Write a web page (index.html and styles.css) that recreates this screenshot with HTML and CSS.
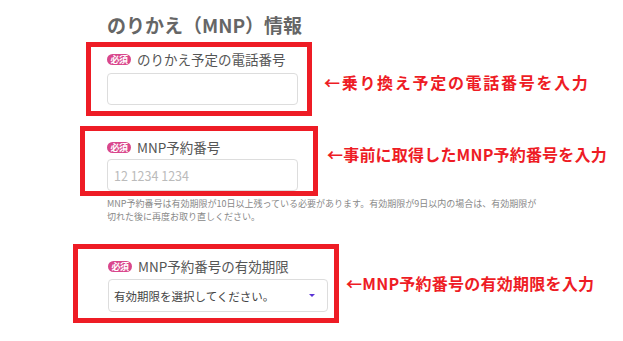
FILE: index.html
```html
<!DOCTYPE html>
<html lang="ja">
<head>
  <meta charset="UTF-8" />
  <meta name="viewport" content="width=device-width, initial-scale=1.0"/>
  <title>のりかえ（MNP）情報</title>
  <link rel="stylesheet" href="styles.css">
</head>
<body>
  <main class="form">
    <h2 class="form-title">のりかえ（MNP）情報</h2>

    <!-- 電話番号 -->
    <div class="row">
      <div class="mark mark-phone">
        <label class="field-label"><span class="badge">必須</span>のりかえ予定の電話番号</label>
        <input class="field-input" type="text">
      </div>
      <p class="callout callout-phone">←乗り換え予定の電話番号を入力</p>
    </div>

    <!-- 予約番号 -->
    <div class="row row-number">
      <div class="mark mark-number">
        <label class="field-label"><span class="badge">必須</span>MNP予約番号</label>
        <input class="field-input" type="text" placeholder="12 1234 1234">
      </div>
      <p class="callout callout-number">←事前に取得したMNP予約番号を入力</p>
    </div>
    <p class="help">MNP予約番号は有効期限が10日以上残っている必要があります。有効期限が9日以内の場合は、有効期限が<br>切れた後に再度お取り直しください。</p>

    <!-- 有効期限 -->
    <div class="row row-limit">
      <div class="mark mark-limit">
        <label class="field-label"><span class="badge">必須</span>MNP予約番号の有効期限</label>
        <div class="field-select">
          <span>有効期限を選択してください。</span>
          <span class="caret"></span>
        </div>
      </div>
      <p class="callout callout-limit">←MNP予約番号の有効期限を入力</p>
    </div>
  </main>
</body>
</html>
```

FILE: styles.css
```css
body {
  margin: 0;
  background: #fff;
  font-family: "Noto Sans CJK JP", "Noto Sans", sans-serif;
  color: #555;
}
.form {
  padding-top: 13px;
}
.form-title {
  margin: 0 0 5px 107px;
  font-size: 19px;
  line-height: 24px;
  font-weight: bold;
  color: #666;
}
.row {
  display: flex;
  align-items: flex-start;
}
.row-number {
  margin-top: 10px;
}
.row-limit {
  margin-top: 21px;
}
.mark {
  box-sizing: border-box;
  display: flex;
  flex-direction: column;
  align-items: flex-start;
  border: 5px solid #ee1c25;
}
.mark-phone {
  margin-left: 86px;
  width: 226px;
  height: 74px;
  padding: 2px 0 0 16px;
  gap: 4px;
}
.mark-number {
  margin-left: 80px;
  width: 238px;
  height: 70px;
  padding: 6px 0 0 22px;
  gap: 2px;
}
.mark-limit {
  margin-left: 73px;
  width: 266px;
  height: 79px;
  padding: 7px 0 0 30px;
  gap: 3px;
}
.field-label {
  display: flex;
  align-items: center;
  gap: 6px;
  font-size: 13.5px;
  line-height: 20px;
  color: #555;
}
.badge {
  display: inline-block;
  width: 24px;
  height: 11px;
  border-radius: 6px;
  background: #d9478c;
  color: #fff;
  font-size: 9px;
  line-height: 11px;
  font-weight: bold;
  text-align: center;
  letter-spacing: -0.5px;
}
.field-input {
  box-sizing: border-box;
  width: 191px;
  height: 32px;
  margin: 0;
  padding: 0 6px;
  border: 1px solid #ddd;
  border-radius: 4px;
  background: #fff;
  font-family: inherit;
  font-size: 12.5px;
  color: #444;
}
.field-input::placeholder {
  color: #bbb;
}
.field-select {
  box-sizing: border-box;
  display: flex;
  align-items: center;
  justify-content: space-between;
  width: 220px;
  height: 33px;
  padding: 0 12px 0 5px;
  border: 1px solid #ddd;
  border-radius: 4px;
  font-size: 11.5px;
  color: #444;
}
.caret {
  width: 0;
  height: 0;
  border-left: 3px solid transparent;
  border-right: 3px solid transparent;
  border-top: 3px solid #5a32d6;
}
.callout {
  margin: 0;
  font-size: 16px;
  line-height: 20px;
  font-weight: bold;
  color: #ee1c25;
  white-space: nowrap;
}
.callout-phone {
  margin: 30px 0 0 12px;
  letter-spacing: 1.7px;
}
.callout-number {
  margin: 18px 0 0 9px;
  letter-spacing: 0.2px;
}
.callout-limit {
  margin: 29px 0 0 7px;
  letter-spacing: 0.25px;
}
.help {
  margin: 1px 0 0 107px;
  font-size: 9px;
  line-height: 13px;
  color: #888;
}
```
